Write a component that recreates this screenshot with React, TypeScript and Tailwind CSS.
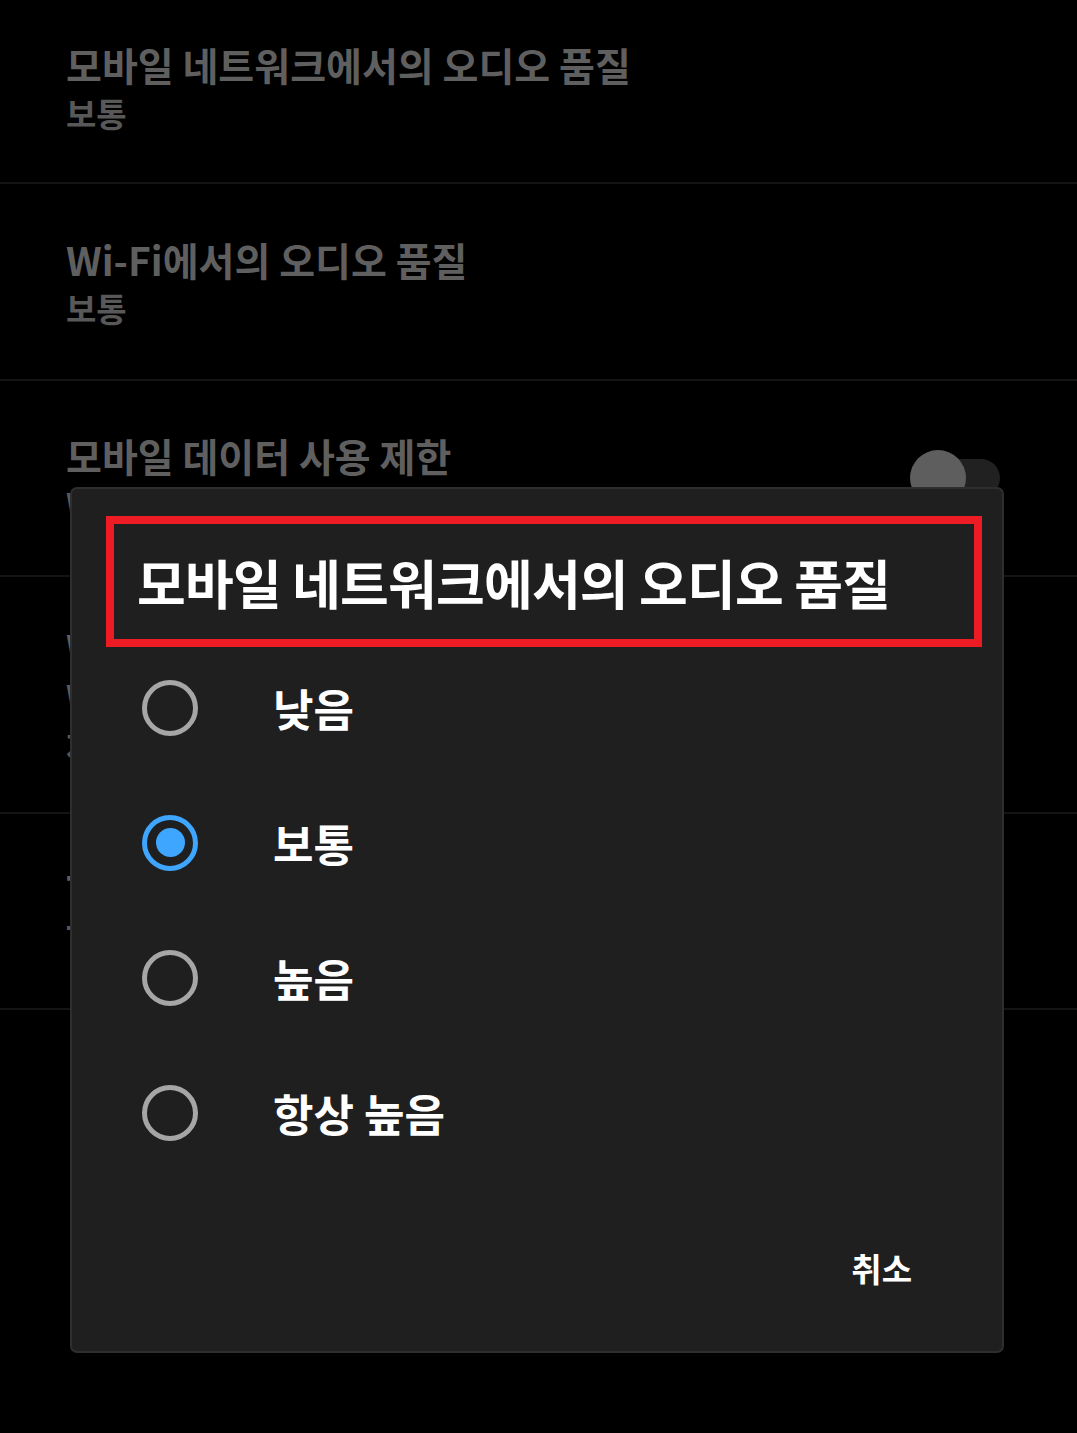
import React from "react";

const FONT = { fontFamily: '"Noto Sans CJK KR", "Noto Sans", sans-serif' };

function Row({
  title,
  sub,
  sub2,
  h,
  right,
}: {
  title: string;
  sub?: string;
  sub2?: string;
  h: string;
  right?: React.ReactNode;
}) {
  return (
    <div className={`flex items-center justify-between pl-[66px] pr-[77px] border-b-2 border-[#141414] ${h}`}>
      <div className="flex flex-col">
        <div className="text-[39px] leading-[46px] font-bold text-[#5f5f5f]">{title}</div>
        {sub && <div className="text-[33px] leading-[40px] font-bold text-[#585858] mt-[6px]">{sub}</div>}
        {sub2 && <div className="text-[33px] leading-[40px] font-bold text-[#585858] mt-[10px]">{sub2}</div>}
      </div>
      {right}
    </div>
  );
}

function Radio({ checked }: { checked?: boolean }) {
  if (checked) {
    return (
      <div className="w-[56px] h-[56px] rounded-full border-[5px] border-[#3ea6ff] flex items-center justify-center">
        <div className="w-[29px] h-[29px] rounded-full bg-[#3ea6ff]" />
      </div>
    );
  }
  return <div className="w-[56px] h-[56px] rounded-full border-[5px] border-[#a6a6a6]" />;
}

export default function App() {
  const options = [
    { label: "낮음", checked: false },
    { label: "보통", checked: true },
    { label: "높음", checked: false },
    { label: "항상 높음", checked: false },
  ];
  return (
    <div className="relative w-[1077px] h-[1433px] bg-black overflow-hidden" style={FONT}>
      <div className="flex flex-col">
        <div className="h-[184px] flex flex-col pl-[66px] pt-[41px] border-b-2 border-[#141414]">
          <div className="text-[39px] leading-[46px] font-bold text-[#5f5f5f]">모바일 네트워크에서의 오디오 품질</div>
          <div className="text-[33px] leading-[40px] font-bold text-[#585858] mt-[6px]">보통</div>
        </div>
        <Row title="Wi-Fi에서의 오디오 품질" sub="보통" h="h-[197px]" />
        <Row
          title="모바일 데이터 사용 제한"
          sub="Wi-Fi 전용"
          h="h-[196px]"
          right={
            <div className="relative w-[90px] h-[56px]">
              <div className="absolute left-[14px] top-[9px] w-[76px] h-[38px] rounded-full bg-[#212121]" />
              <div className="absolute left-0 top-0 w-[56px] h-[56px] rounded-full bg-[#5e5e5e]" />
            </div>
          }
        />
        <Row title="Wi-Fi만" sub="Wi-Fi 전용" sub2="재생" h="h-[237px]" />
        <Row title="Tap" sub="T" h="h-[196px]" />
      </div>

      {/* Dialog */}
      <div className="absolute left-[70px] top-[487px] w-[934px] h-[866px] rounded-[7px] bg-[#1f1f1f] border-2 border-[#2e2e2e] flex flex-col">
        <div className="ml-[34px] mr-[20px] mt-[27px] h-[131px] border-[8px] border-[#ed1c24] flex items-center pl-[23px]">
          <div className="text-[53px] leading-[62px] font-bold text-white tracking-[-0.8px]">모바일 네트워크에서의 오디오 품질</div>
        </div>
        <div className="flex flex-col mt-[-7px]">
          {options.map((o) => (
            <div key={o.label} className="h-[135px] flex items-center pl-[70px]">
              <Radio checked={o.checked} />
              <div className="ml-[75px] text-[44px] leading-[52px] font-bold text-white">{o.label}</div>
            </div>
          ))}
        </div>
        <div className="flex justify-end pr-[90px] mt-[68px]">
          <div className="text-[33px] leading-[40px] font-bold text-white">취소</div>
        </div>
      </div>
    </div>
  );
}
